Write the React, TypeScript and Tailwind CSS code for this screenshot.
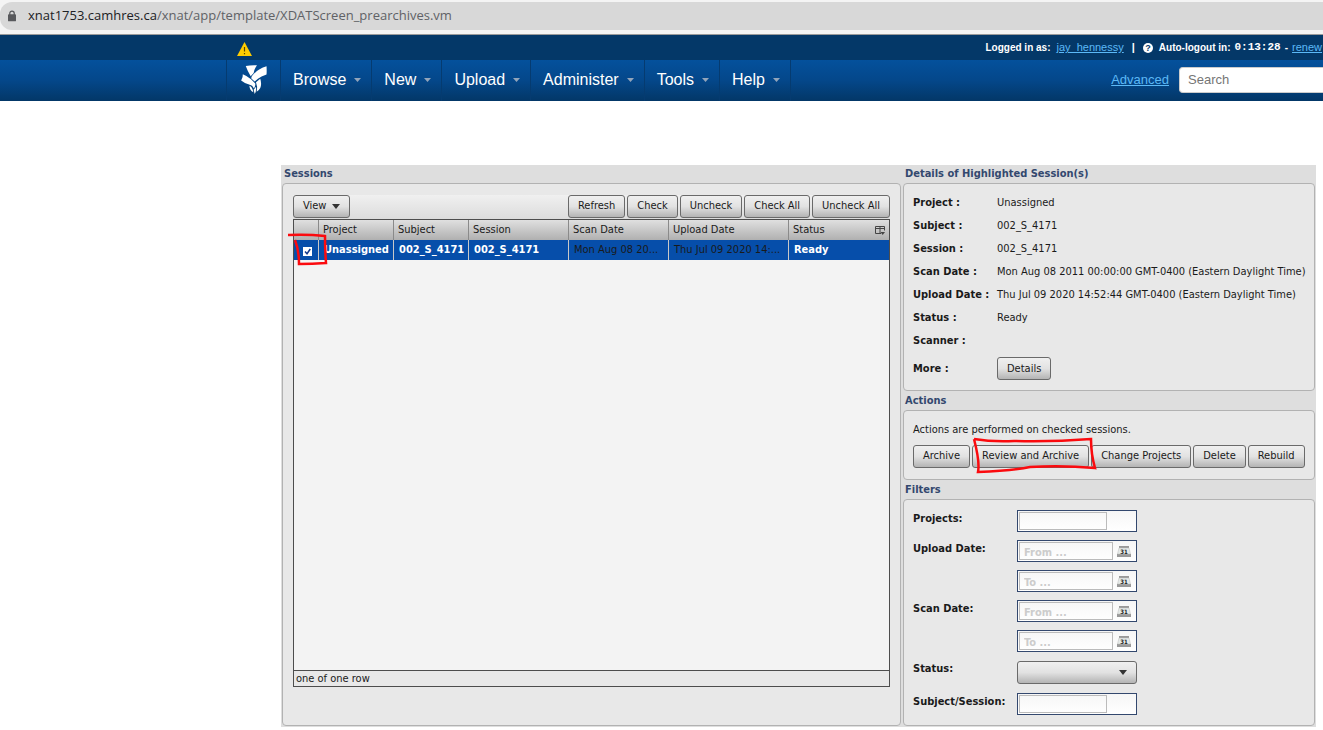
import type { InputHTMLAttributes, ReactNode } from 'react'

const tahoma = "font-['DejaVu_Sans_Condensed','Noto_Sans',sans-serif]"

const menus = ['Browse', 'New', 'Upload', 'Administer', 'Tools', 'Help']

const details = [
  { label: 'Project :', value: 'Unassigned' },
  { label: 'Subject :', value: '002_S_4171' },
  { label: 'Session :', value: '002_S_4171' },
  { label: 'Scan Date :', value: 'Mon Aug 08 2011 00:00:00 GMT-0400 (Eastern Daylight Time)' },
  { label: 'Upload Date :', value: 'Thu Jul 09 2020 14:52:44 GMT-0400 (Eastern Daylight Time)' },
  { label: 'Status :', value: 'Ready' },
  { label: 'Scanner :', value: '' },
]

function Caret({ className }: { className: string }) {
  return (
    <svg viewBox="0 0 8 5" preserveAspectRatio="none" className={className} fill="currentColor" aria-hidden="true">
      <path d="M0 0h8L4 5z" />
    </svg>
  )
}

function AddressBar() {
  return (
    <div className="h-[35px] border-b border-[#9a9a9a] bg-[#f4f4f4] pt-0.5">
      <div className="flex h-7 items-center gap-3 rounded-l-xl bg-[#d8d8d8] pl-2">
        <svg viewBox="0 0 9 12" className="h-3 w-2 text-[#58595c]" aria-hidden="true">
          <rect y="4" width="9" height="8" rx="1" fill="currentColor" />
          <path d="M2 5V3a2.5 2.5 0 0 1 5 0v2" fill="none" stroke="currentColor" strokeWidth="1.4" />
        </svg>
        <span className="font-['Open_Sans',sans-serif] text-[13px] text-[#606266]">
          <span className="text-[#202124]">xnat1753.camhres.ca</span>/xnat/app/template/XDATScreen_prearchives.vm
        </span>
      </div>
    </div>
  )
}

function Logo() {
  return (
    <svg viewBox="0 0 78 88" className="h-[29px] w-[26px]" fill="#fff" aria-hidden="true">
      <path d="M14 3Q30 0 48 1Q40 12 38 24L29 34Q20 20 14 3z" />
      <path d="M77 4Q78 18 77 29Q60 34 51 42L41 50L31 41Q30 37 34 32Q50 12 77 4z" />
      <path d="M5 28Q20 34 30 43L43 56Q44 64 39 71Q34 61 26 60Q12 57 0 47Q6 38 5 28z" />
      <path d="M45 52L58 42Q63 58 58 70Q54 78 47 81Q51 66 45 52z" />
      <path d="M25 63Q34 65 37 83Q26 77 25 63zM38 75L45 66Q47 78 41 88z" />
    </svg>
  )
}

function Header() {
  return (
    <header className="overflow-hidden font-['Liberation_Sans',Arial,sans-serif]">
      <div className="flex h-[25px] items-center bg-[#043868] pl-[237px] text-[11px] whitespace-nowrap text-white">
        <svg viewBox="0 0 15 14" className="mt-0.5 h-3.5 w-[15px]" aria-hidden="true">
          <path d="M7.5 0L15 14H0z" fill="#fc0" />
          <path d="M7.5 5v4.5M7.5 11v1.3" stroke="#5a4500" strokeWidth="1.2" />
        </svg>
        <div className="ml-auto flex items-center pr-px">
          <span className="text-[10px] font-bold">Logged in as:</span>
          <a href="#user" className="ml-1.5 text-[#5cb9f7] underline">jay_hennessy</a>
          <span className="mx-2 font-bold">|</span>
          <svg viewBox="0 0 10 10" className="mr-1.5 size-2.5" aria-hidden="true">
            <circle cx="5" cy="5" r="5" fill="#fff" />
            <text x="5" y="8" textAnchor="middle" fontSize="9" fontWeight="bold" fill="#043868">?</text>
          </svg>
          <span className="text-[10px] font-bold">Auto-logout in:</span>
          <span className="ml-1 font-['Liberation_Mono',monospace] font-bold">0:13:28</span>
          <span className="mx-1 text-[10px] font-bold">-</span>
          <a href="#renew" className="text-[#5cb9f7] underline">renew</a>
        </div>
      </div>
      <div className="flex h-[41px] bg-linear-to-b from-[#04519c] via-[#04478a] to-[#033767] pl-[226px]">
        <a href="#home" aria-label="Home" className="flex w-[54px] shrink-0 justify-center border-l border-[#053b70] pt-[5px]">
          <Logo />
        </a>
        <nav className="flex border-l border-[#053b70]">
          {menus.map((name) => (
            <button key={name} type="button" className="flex items-center gap-2 border-r border-[#053b70] pr-2.5 pb-px pl-3 text-[16px] text-white">
              {name}
              <Caret className="h-1 w-[7px] text-[#93a5bb]" />
            </button>
          ))}
        </nav>
        <div className="ml-auto flex items-center gap-2.5 pb-0.5 text-[13px]">
          <a href="#advanced" className="text-[#5cb9f7] underline">Advanced</a>
          <input
            type="search"
            aria-label="Search"
            placeholder="Search"
            className="h-[26px] w-36 rounded-l border border-r-0 border-[#ccc] bg-white px-2 placeholder:text-[#757575]"
          />
        </div>
      </div>
    </header>
  )
}

function Button({ children }: { children: ReactNode }) {
  return (
    <button
      type="button"
      className="flex h-[23px] items-center gap-1.5 rounded-[3px] border border-[#6a6a6a] bg-linear-to-b from-[#f0f0f0] via-[#e2e2e2] to-[#b4b4b4] px-[9px] whitespace-nowrap"
    >
      {children}
    </button>
  )
}

function Panel({ title, className = '', children }: { title: string; className?: string; children: ReactNode }) {
  return (
    <section className="flex grow flex-col">
      <h2 className="h-[18px] pl-0.5 leading-[18px] font-bold text-[#33486e]">{title}</h2>
      <div className={`grow rounded border border-[#b2b2b2] bg-[#e8e8e8] ${className}`}>{children}</div>
    </section>
  )
}

function CheckMark() {
  return (
    <svg viewBox="0 0 9 9" className="pointer-events-none absolute inset-0" fill="none" aria-hidden="true">
      <path d="M2 4.5l2 2.2L7.3 2" stroke="#123a8c" strokeWidth="1.5" />
    </svg>
  )
}

function SessionTable() {
  const head = 'border-l border-[#8a8a8a] px-1 text-left font-normal'
  const cell = 'border-l border-[#c8c8c8] px-[5px]'
  return (
    <div className="flex grow flex-col border border-[#4d4d4d] bg-[#f3f3f3]">
      <table className="w-full table-fixed border-separate border-spacing-0">
        <colgroup>
          <col className="w-6" />
          <col className="w-[75px]" />
          <col className="w-[75px]" />
          <col className="w-[100px]" />
          <col className="w-[100px]" />
          <col className="w-[120px]" />
          <col />
        </colgroup>
        <thead>
          <tr className="h-5 bg-linear-to-b from-[#e0e0e0] to-[#b0b0b0] whitespace-nowrap">
            <th aria-label="Checked" />
            <th className={head}>Project</th>
            <th className={head}>Subject</th>
            <th className={head}>Session</th>
            <th className={head}>Scan Date</th>
            <th className={head}>Upload Date</th>
            <th className={head}>
              <span className="flex items-center justify-between">
                Status
                <button type="button" aria-label="Choose columns">
                  <svg viewBox="0 0 10 9" className="h-[9px] w-2.5" fill="none" stroke="#444" aria-hidden="true">
                    <path d="M6 7.5H.5v-7h9v4M.5 2.5h9M5 .5v7" />
                    <path d="M5.5 6h4.5L7.7 9z" fill="#444" stroke="none" />
                  </svg>
                </button>
              </span>
            </th>
          </tr>
        </thead>
        <tbody>
          <tr className="h-5 bg-[#064eaa] whitespace-nowrap">
            <td className="relative p-0 pt-[3px] pl-[9px]">
              <span className="relative block size-[9px]">
                <input type="checkbox" defaultChecked aria-label="Select session" className="block size-[9px] appearance-none bg-white" />
                <CheckMark />
              </span>
              <svg viewBox="0 0 42 34" className="pointer-events-none absolute -top-2 -left-[7px] h-[34px] w-[42px]" fill="none" aria-hidden="true">
                <path d="M1 3Q20 2 38 4Q38 18 39 31Q25 32 12 32Q12 18 8 8" stroke="#fb0a0e" strokeWidth="2.5" />
              </svg>
            </td>
            <td className={`${cell} font-bold text-white`}>Unassigned</td>
            <td className={`${cell} font-bold text-white`}>002_S_4171</td>
            <td className={`${cell} font-bold text-white`}>002_S_4171</td>
            <td className={cell}>Mon Aug 08 20...</td>
            <td className={cell}>Thu Jul 09 2020 14:...</td>
            <td className={`${cell} font-bold text-white`}>Ready</td>
          </tr>
        </tbody>
      </table>
      <div className="mt-auto h-4 border-t border-[#4d4d4d] bg-[#e8e8e8] pl-0.5 leading-4">one of one row</div>
    </div>
  )
}

function CalendarIcon() {
  return (
    <svg viewBox="0 0 14 13" className="h-[13px] w-3.5" aria-hidden="true">
      <path d="M2 1h10v2H2zM0 9h14v3H0z" fill="#999" />
      <path d="M2 3h10l1.5 6H.5z" fill="#e6ebe9" stroke="#bbb" strokeWidth=".5" />
      <text x="7" y="8.5" textAnchor="middle" fontSize="6" fontWeight="bold" fill="#222">31</text>
    </svg>
  )
}

function TextBox(props: InputHTMLAttributes<HTMLInputElement>) {
  return (
    <div className="mb-2 flex h-[22px] w-[120px] items-center border border-[#33486e] bg-linear-to-b from-[#f6f6f6] to-white pl-px">
      <input {...props} className="h-[18px] w-[88px] border border-[#bbb]" />
    </div>
  )
}

function DateBox(props: InputHTMLAttributes<HTMLInputElement>) {
  return (
    <div className="mb-2 flex h-[22px] w-[120px] items-center border border-[#33486e] bg-linear-to-b from-[#f6f6f6] to-white pl-px">
      <input {...props} className="h-[18px] w-[94px] border border-[#bbb] px-1 pt-0.5 font-bold placeholder:text-[#ccc]" />
      <button type="button" aria-label="Open calendar" className="ml-1">
        <CalendarIcon />
      </button>
    </div>
  )
}

function FilterLabel({ htmlFor, children }: { htmlFor: string; children: ReactNode }) {
  return <label htmlFor={htmlFor} className="h-[18px] leading-[18px] font-bold whitespace-nowrap">{children}</label>
}

export default function App() {
  return (
    <div className="min-h-screen bg-white">
      <AddressBar />
      <Header />
      <main className={`mt-16 mr-[7px] ml-[281px] flex bg-[#dedede] pb-px text-[11px] text-[#1a1a1a] ${tahoma}`}>
        <div className="flex min-w-0 grow flex-col px-px">
          <Panel title="Sessions" className="flex flex-col px-2.5 pt-[11px] pb-[38px]">
            <div className="flex gap-0.5 bg-linear-to-b from-[#f0f0f0] to-[#dcdcdc] pb-px">
              <Button>
                View
                <Caret className="h-[5px] w-2 text-[#333]" />
              </Button>
              <span className="grow" />
              <Button>Refresh</Button>
              <Button>Check</Button>
              <Button>Uncheck</Button>
              <Button>Check All</Button>
              <Button>Uncheck All</Button>
            </div>
            <SessionTable />
          </Panel>
        </div>
        <div className="flex w-[414px] shrink-0 flex-col gap-px px-px">
          <Panel title="Details of Highlighted Session(s)" className="px-[9px] pt-[7px] pb-[5px]">
            <dl className="grid grid-cols-[84px_1fr] leading-[23px] whitespace-nowrap">
              {details.map(({ label, value }) => (
                <div key={label} className="contents">
                  <dt className="font-bold">{label}</dt>
                  <dd>{value}</dd>
                </div>
              ))}
              <dt className="leading-[33px] font-bold">More :</dt>
              <dd className="flex items-center">
                <Button>Details</Button>
              </dd>
            </dl>
          </Panel>
          <Panel title="Actions" className="px-[9px] pt-2.5 pb-[11px]">
            <p className="h-6 leading-[18px]">Actions are performed on checked sessions.</p>
            <div className="flex gap-0.5">
              <Button>Archive</Button>
              <div className="relative">
                <Button>Review and Archive</Button>
                <svg viewBox="0 0 125 38" className="pointer-events-none absolute -top-[9px] left-0 h-[38px] w-[125px]" fill="none" aria-hidden="true">
                  <path d="M2 3Q20 6 42 5Q80 6 119 3Q119 18 123 32Q90 29 58 31Q40 35 6 36Q8 26 2 3" stroke="#fb0a0e" strokeWidth="2.5" />
                </svg>
              </div>
              <Button>Change Projects</Button>
              <Button>Delete</Button>
              <Button>Rebuild</Button>
            </div>
          </Panel>
          <Panel title="Filters" className="px-[9px] pt-2.5 pb-0.5">
            <form className="grid grid-cols-[104px_1fr]">
              <FilterLabel htmlFor="projects">Projects:</FilterLabel>
              <TextBox id="projects" />
              <FilterLabel htmlFor="upload-from">Upload Date:</FilterLabel>
              <DateBox id="upload-from" placeholder="From ..." />
              <span />
              <DateBox aria-label="Upload date to" placeholder="To ..." />
              <FilterLabel htmlFor="scan-from">Scan Date:</FilterLabel>
              <DateBox id="scan-from" placeholder="From ..." />
              <span />
              <DateBox aria-label="Scan date to" placeholder="To ..." />
              <FilterLabel htmlFor="status">Status:</FilterLabel>
              <div className="relative mt-px mb-[9px] w-[120px]">
                <select
                  id="status"
                  className="block h-[23px] w-full appearance-none rounded-[3px] border border-[#6a6a6a] bg-linear-to-b from-[#f0f0f0] via-[#e2e2e2] to-[#b4b4b4]"
                >
                  <option />
                </select>
                <Caret className="pointer-events-none absolute top-[9px] right-2.5 h-[5px] w-2 text-[#333]" />
              </div>
              <FilterLabel htmlFor="subject">Subject/Session:</FilterLabel>
              <TextBox id="subject" />
            </form>
          </Panel>
        </div>
      </main>
    </div>
  )
}
